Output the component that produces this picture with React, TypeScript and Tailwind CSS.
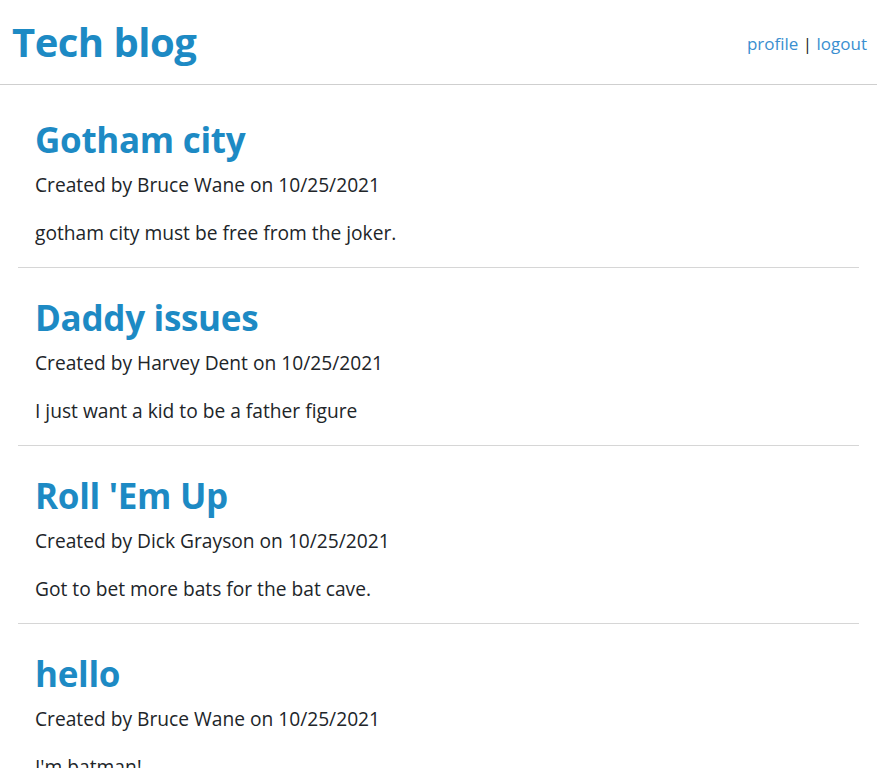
const posts = [
  {
    title: "Gotham city",
    author: "Bruce Wane",
    date: "10/25/2021",
    body: "gotham city must be free from the joker.",
  },
  {
    title: "Daddy issues",
    author: "Harvey Dent",
    date: "10/25/2021",
    body: "I just want a kid to be a father figure",
  },
  {
    title: "Roll 'Em Up",
    author: "Dick Grayson",
    date: "10/25/2021",
    body: "Got to bet more bats for the bat cave.",
  },
  {
    title: "hello",
    author: "Bruce Wane",
    date: "10/25/2021",
    body: "I'm batman!",
  },
];

export default function App() {
  return (
    <div className="min-h-screen bg-white font-['Open_Sans',sans-serif] text-[#212529]">
      <header className="flex h-[85px] items-center justify-between border-b border-[#cfcfcf] pl-3 pr-[10px]">
        <h1 className="text-[40px] font-bold leading-none tracking-[-0.5px] text-[#1d8ac4]">
          Tech blog
        </h1>
        <nav className="mt-[3px] text-[17px] text-[#212529]">
          <a href="#" className="text-[#3a8fd0]">
            profile
          </a>{" "}
          |{" "}
          <a href="#" className="text-[#3a8fd0]">
            logout
          </a>
        </nav>
      </header>
      <main className="px-[18px] pt-[5px]">
        {posts.map((post) => (
          <article
            key={post.title}
            className="border-b border-[#d6d6d6] px-[17px] pb-[19px] pt-[28px]"
          >
            <h2 className="text-[35px] font-bold leading-[44px] tracking-[-0.3px] text-[#1d8ac4]">
              {post.title}
            </h2>
            <p className="mt-[8px] text-[19.2px] leading-[30px]">
              Created by {post.author} on {post.date}
            </p>
            <p className="mt-[18px] text-[19.2px] leading-[30px]">{post.body}</p>
          </article>
        ))}
      </main>
    </div>
  );
}
